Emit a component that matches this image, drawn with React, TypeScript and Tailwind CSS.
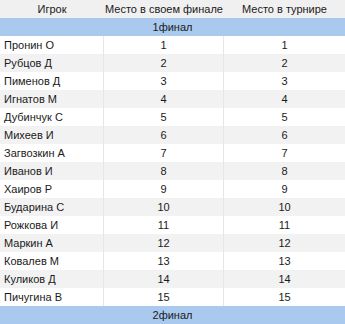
const rows = [
  ['Пронин О', 1, 1],
  ['Рубцов Д', 2, 2],
  ['Пименов Д', 3, 3],
  ['Игнатов М', 4, 4],
  ['Дубинчук С', 5, 5],
  ['Михеев И', 6, 6],
  ['Загвозкин А', 7, 7],
  ['Иванов И', 8, 8],
  ['Хаиров Р', 9, 9],
  ['Бударина С', 10, 10],
  ['Рожкова И', 11, 11],
  ['Маркин А', 12, 12],
  ['Ковалев М', 13, 13],
  ['Куликов Д', 14, 14],
  ['Пичугина В', 15, 15],
] as const;

export default function App() {
  return (
    <div className="w-[345px] h-[324px] overflow-hidden bg-white font-['Liberation_Sans',Arial,sans-serif] text-[11px] text-[#1a1a1a]">
      <div className="grid h-[18px] grid-cols-[104px_120px_121px] items-center bg-[#f0f0f0] text-center">
        <div>Игрок</div>
        <div>Место в своем финале</div>
        <div>Место в турнире</div>
      </div>
      <div className="flex h-[18px] items-center justify-center bg-[#a9c9ef]">1финал</div>
      {rows.map(([name, local, total], i) => (
        <div
          key={name}
          className={`grid h-[18px] grid-cols-[104px_120px_121px] ${i % 2 === 1 ? 'bg-[#f2f2f2]' : 'bg-white'}`}
        >
          <div className="flex items-center border-r border-[#e6e6e6] pl-1">{name}</div>
          <div className="flex items-center justify-center border-r border-[#e6e6e6]">{local}</div>
          <div className="flex items-center justify-center">{total}</div>
        </div>
      ))}
      <div className="flex h-[18px] items-center justify-center bg-[#a9c9ef]">2финал</div>
    </div>
  );
}
